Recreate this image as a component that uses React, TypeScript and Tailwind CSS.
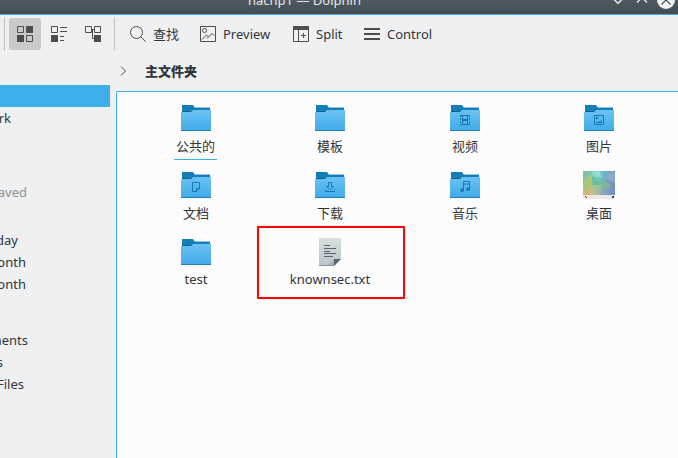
import React from "react";

const INK = "#4d4d4d";

function ToolIcon({ children }: { children: React.ReactNode }) {
  return (
    <svg width="16" height="16" viewBox="0 0 16 16" fill="none" stroke={INK} className="shrink-0">
      {children}
    </svg>
  );
}

function Folder({ children }: { children?: React.ReactNode }) {
  return (
    <svg width="32" height="32" viewBox="0 0 32 32" className="shrink-0">
      <defs>
        <linearGradient id="folder" x1="0" y1="0" x2="0" y2="1">
          <stop offset="0" stopColor="#6cc1f2" />
          <stop offset="1" stopColor="#3fabe9" />
        </linearGradient>
      </defs>
      <path d="M14 5h16v1H14z" fill="#8fc4e0" />
      <path d="M2 3h11l2 3h15v6H2z" fill="#147eb8" />
      <path d="M2 9h10l1-1v2H2z" fill="#0f6190" />
      <path d="M1 10h10l2-2h18v21H1z" fill="url(#folder)" />
      <path d="M1 28h30v1H1z" fill="#2980b9" />
      <g stroke="#1777ae" fill="none">
        {children}
      </g>
    </svg>
  );
}

function VideoGlyph() {
  return (
    <>
      <path d="M13.500 13v10M18.500 13v10M11 13.500h10M11 22.500h10" />
      <path d="M11.500 13v10M20.500 13v10" strokeDasharray="2 1" />
      <path d="M13 18h6" strokeWidth="2" />
    </>
  );
}

function ImageGlyph() {
  return (
    <>
      <path d="M11.500 13.500h9v9h-9z" />
      <path d="M13 15h2v2h-2zM13 21v-1h2l1-1 1 1 2-2v3z" fill="#1777ae" stroke="none" />
    </>
  );
}

function DocGlyph() {
  return <path d="M12.500 13.500h7v6l-3 3h-4zM19.500 19.500h-3v3" />;
}

function DownloadGlyph() {
  return <path d="M14.500 13.500h3v4h2l-3.500 3-3.500-3h2zM11.500 20.500v2h9v-2" />;
}

function MusicGlyph() {
  return (
    <>
      <path d="M14.500 21v-8.500h6V20M14.500 15h6" />
      <ellipse cx="13" cy="21.300" rx="2" ry="1.700" fill="#1777ae" stroke="none" />
      <ellipse cx="19" cy="20.300" rx="2" ry="1.700" fill="#1777ae" stroke="none" />
    </>
  );
}

function DesktopIcon() {
  return (
    <svg width="32" height="32" viewBox="0 0 32 32" className="shrink-0">
      <defs>
        <linearGradient id="sky" x1="0" y1="0" x2="1" y2="0.300">
          <stop offset="0" stopColor="#8fc7a5" />
          <stop offset="0.400" stopColor="#78cfc8" />
          <stop offset="0.700" stopColor="#6eb2c5" />
          <stop offset="1" stopColor="#6d93c3" />
        </linearGradient>
        <linearGradient id="panel" x1="0" y1="0" x2="1" y2="0">
          <stop offset="0" stopColor="#f8e6da" />
          <stop offset="1" stopColor="#e4e9f2" />
        </linearGradient>
        <linearGradient id="ground" x1="0" y1="0" x2="1" y2="0">
          <stop offset="0" stopColor="#e3ae70" />
          <stop offset="0.350" stopColor="#b9c391" />
          <stop offset="0.650" stopColor="#8ba4c0" />
          <stop offset="1" stopColor="#6f8dc0" />
        </linearGradient>
      </defs>
      <path d="M0 2h32v24H0z" fill="url(#sky)" />
      <path d="M0 14l9-4 10 6 13-6v16H0z" fill="url(#ground)" />
      <path d="M0 12l9-6v10L0 24z" fill="#aac872" />
      <path d="M0 2h10L0 12z" fill="#83c3a4" />
      <path d="M9 6l10 10H9z" fill="#6abfa0" />
      <path d="M9 16h10l-5 7z" fill="#9ac49a" />
      <path d="M19 9l9 8-9 5z" fill="#7fb596" />
      <path d="M22 9l7-7 3 3v9z" fill="#8baac9" />
      <path d="M10 2h6l3 7-10-3z" fill="#8edfd3" />
      <path d="M0 26h32v4H0z" fill="url(#panel)" />
      <path d="M2 27h1v1H2zM3 28h1v1H3zM29 27h2v2h-2z" fill="#41484e" />
    </svg>
  );
}

function TextFileIcon() {
  return (
    <svg width="32" height="32" viewBox="0 0 32 32" className="shrink-0">
      <defs>
        <linearGradient id="sheet" x1="0" y1="0" x2="0" y2="1">
          <stop offset="0" stopColor="#d9dee0" />
          <stop offset="1" stopColor="#bdc3c7" />
        </linearGradient>
      </defs>
      <path d="M5 2h22v21l-7 7H5z" fill="url(#sheet)" />
      <path d="M13 30l7-7v7z" fill="#a9b0b4" />
      <path d="M20 23h7l-7 7z" fill="#566573" />
      <path d="M5 29h15v1H5z" fill="#8b9499" />
      <path d="M10 9.500h6M10 12.500h12M10 15.500h6M10 17.500h12M10 20.500h9" stroke="#566573" />
    </svg>
  );
}

const sidebarRows = [
  { text: "Network", cls: "w-[11px]" },
  { text: "Recently Saved", cls: "mt-[52px] w-[27px] text-[#8e9193]" },
  { text: "Yesterday", cls: "mt-[26px] w-[18px]" },
  { text: "This Month", cls: "w-[26px]" },
  { text: "Last Month", cls: "w-[26px]" },
  { text: "Documents", cls: "mt-[34px] w-[28px]" },
  { text: "Images", cls: "w-[3px]" },
  { text: "Audio Files", cls: "w-[24px]" },
];

const files = [
  { name: "公共的", icon: <Folder />, label: "mt-[3px] h-[23px] mr-px border-b border-[#3daee9] px-[2px]" },
  { name: "模板", icon: <Folder />, label: "mt-[3px]" },
  { name: "视频", icon: <Folder><VideoGlyph /></Folder>, label: "mt-[3px]" },
  { name: "图片", icon: <Folder><ImageGlyph /></Folder>, label: "mt-[3px]" },
  { name: "文档", icon: <Folder><DocGlyph /></Folder>, label: "mt-[3px]" },
  { name: "下载", icon: <Folder><DownloadGlyph /></Folder>, label: "mt-[3px]" },
  { name: "音乐", icon: <Folder><MusicGlyph /></Folder>, label: "mt-[3px]" },
  { name: "桌面", icon: <DesktopIcon />, label: "mt-[3px]" },
  { name: "test", icon: <Folder />, label: "mt-[2px]" },
  { name: "knownsec.txt", icon: <TextFileIcon />, label: "mt-[2px]" },
];

function TitleBar() {
  return (
    <header className="flex h-[15px] shrink-0 items-start overflow-hidden border-b border-[#3daee9] bg-gradient-to-b from-[#4e5961] to-[#434c53] text-[#e5e8ea]">
      <span className="-mt-[9px] ml-[248px] w-[360px] leading-[18px] whitespace-nowrap">hachp1 — Dolphin</span>
      <svg width="70" height="14" viewBox="0 0 70 14" fill="none" className="shrink-0" stroke="#eff0f1">
        <path d="M5.500-1L10 3.300 14.500-1" strokeWidth="1.300" />
        <path d="M29 2.500L34-2.500l5 5" strokeWidth="1.300" />
        <circle cx="58" cy="0" r="9" fill="#eff0f1" stroke="none" />
        <path d="M53.500 4.500L58 0l4.500 4.500M53.500-4.500L58 0l4.500-4.500" stroke="#475057" strokeWidth="1.200" />
      </svg>
    </header>
  );
}

function Toolbar() {
  return (
    <div className="flex h-[39px] shrink-0 items-center pb-px pl-1">
      <i className="h-[34px] w-px bg-[#c0c2c4]" />
      <div className="ml-1 flex h-8 w-8 items-center justify-center rounded-[3px] bg-[#c9cacb]">
        <ToolIcon>
          <path d="M.5.500h6v6h-6zM9.500 9.500h6v6h-6z" />
          <path d="M9 0h7v7H9zM0 9h7v7H0z" fill={INK} stroke="none" />
        </ToolIcon>
      </div>
      <div className="ml-[10px] flex gap-[18px]">
        <ToolIcon>
          <path d="M.5.500h6v6h-6zM9 1.500h7M9 5.500h7M9 10.500h4M9 14.500h4" />
          <path d="M0 9h7v7H0z" fill={INK} stroke="none" />
        </ToolIcon>
        <ToolIcon>
          <path d="M.5.500h6v6h-6zM9.500.500h6v6h-6zM7 3.500h2M7.500 4v8.500H9" />
          <path d="M9 9h7v7H9z" fill={INK} stroke="none" />
        </ToolIcon>
      </div>
      <i className="ml-[13px] h-[34px] w-px bg-[#c0c2c4]" />
      <div className="ml-[15px] flex w-[70px] items-center gap-[7px]">
        <ToolIcon>
          <circle cx="6.500" cy="6.500" r="6" />
          <path d="M10.700 10.700l5 5" />
        </ToolIcon>
        <span>查找</span>
      </div>
      <div className="flex w-[93px] items-center gap-[7px]">
        <ToolIcon>
          <path d="M.5.500h15v15H.5zM2 13.500L6.500 9l2 2 3.500-3.500 2 2M8.500 11l-1.500 1.500" />
          <circle cx="4.500" cy="4.500" r="2" />
        </ToolIcon>
        <span>Preview</span>
      </div>
      <div className="flex w-[71px] items-center gap-[7px]">
        <ToolIcon>
          <path d="M.5.500h15v15H.5zM5.500 3v12M8 9.500h5M10.500 7v5" />
          <path d="M0 0h16v4H0z" fill={INK} stroke="none" />
        </ToolIcon>
        <span>Split</span>
      </div>
      <div className="flex items-center gap-[7px]">
        <ToolIcon>
          <path d="M0 3h16M0 8h16M0 13h16" strokeWidth="2" />
        </ToolIcon>
        <span>Control</span>
      </div>
    </div>
  );
}

export default function App() {
  return (
    <div className="relative flex h-[458px] w-[678px] flex-col overflow-hidden bg-[#eff0f1] font-['Noto_Sans','Noto_Sans_CJK_SC',sans-serif] text-[13px] leading-[18px] text-[#31363b]">
      <TitleBar />
      <Toolbar />
      <div className="flex min-h-0 flex-1">
        <aside className="w-[116px] shrink-0 pt-[31px]">
          <div className="h-[22px] w-[110px] bg-[#3daee9]" />
          {sidebarRows.map((row) => (
            <div
              key={row.text}
              className={`flex h-[22px] items-center justify-end overflow-hidden whitespace-nowrap ${row.cls}`}
            >
              {row.text}
            </div>
          ))}
        </aside>
        <main className="flex flex-1 flex-col">
          <div className="flex h-[37px] shrink-0 items-center pb-[3px] pl-[4px]">
            <svg width="7" height="10" viewBox="0 0 7 10" fill="none" stroke={INK}>
              <path d="M1 .500L5.500 5 1 9.500" />
            </svg>
            <span className="ml-[18px] font-black">主文件夹</span>
          </div>
          <div className="grid flex-1 auto-rows-[67px] grid-cols-[134px_134px_136px_132px] content-start rounded-tl-[2px] border-t border-l border-[#3daee9] bg-[#fcfcfc] pt-[10px] pl-3">
            {files.map((file) => (
              <div key={file.name} className="flex flex-col items-center">
                {file.icon}
                <span className={file.label}>{file.name}</span>
              </div>
            ))}
          </div>
        </main>
      </div>
      <div className="absolute top-[226px] left-[257px] h-[73px] w-[148px] rounded-[1px] border-2 border-[#fa0505] shadow-[0_0_1px_#ff6060]" />
    </div>
  );
}
